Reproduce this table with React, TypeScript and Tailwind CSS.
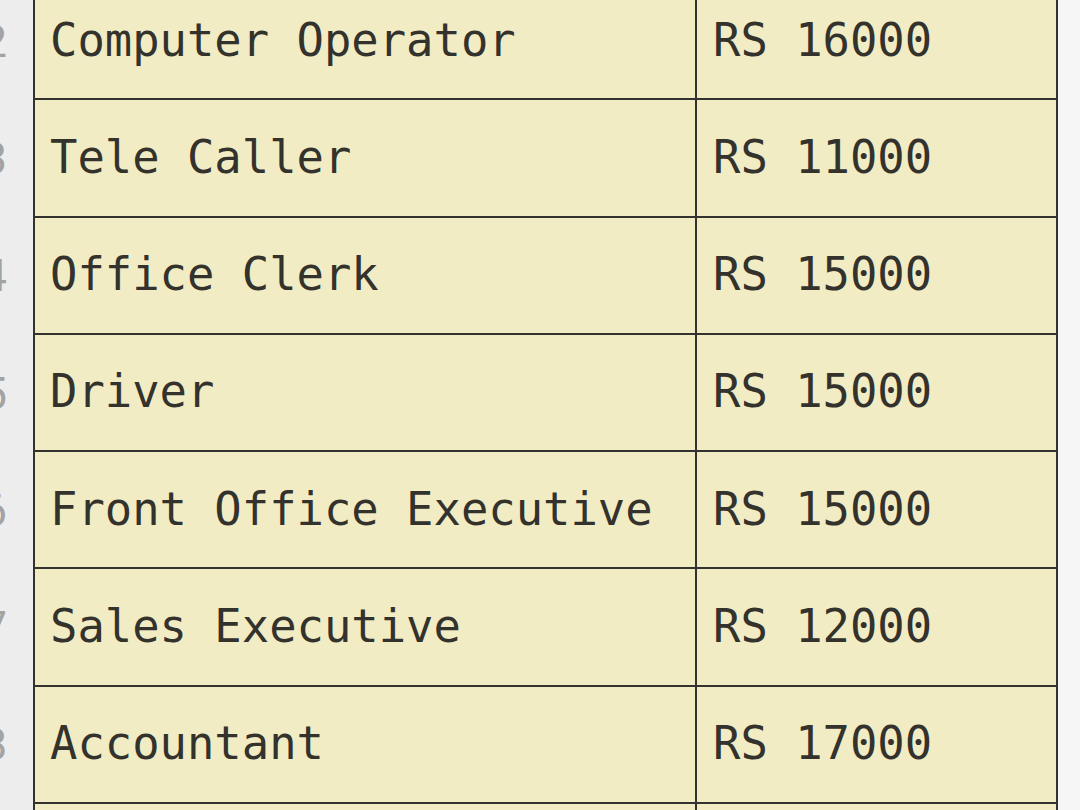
import React from 'react';

const rows = [
  { n: 2, title: 'Computer Operator', salary: 'RS 16000' },
  { n: 3, title: 'Tele Caller', salary: 'RS 11000' },
  { n: 4, title: 'Office Clerk', salary: 'RS 15000' },
  { n: 5, title: 'Driver', salary: 'RS 15000' },
  { n: 6, title: 'Front Office Executive', salary: 'RS 15000' },
  { n: 7, title: 'Sales Executive', salary: 'RS 12000' },
  { n: 8, title: 'Accountant', salary: 'RS 17000' },
  { n: 9, title: '', salary: '' },
];

export default function App() {
  return (
    <div className="w-[1080px] h-[810px] overflow-hidden bg-[#f6f6f6] flex">
      <div className="w-[33px] shrink-0 bg-[#ededed] overflow-hidden">
        <div className="mt-[-17px]">
          {rows.map(r => (
            <div key={r.n} className="h-[117.3px] flex items-center justify-end pr-[26px] text-[44px] text-[#a3a3a3] font-['Roboto',sans-serif]">
              {r.n}
            </div>
          ))}
        </div>
      </div>
      <div className="w-[1025px] shrink-0 mt-[-17px] border-x-2 border-[#33322e] bg-[#f2ecc4] text-[#33322c] text-[45.5px] font-['DejaVu_Sans_Mono',monospace]">
        {rows.map(r => (
          <div key={r.n} className="h-[117.3px] flex border-b-[2.5px] border-[#33322e]">
            <div className="w-[662px] shrink-0 border-r-2 border-[#33322e] flex items-center pl-[15px] whitespace-pre">
              {r.title}
            </div>
            <div className="flex-1 flex items-center pl-[16px] whitespace-pre">
              {r.salary}
            </div>
          </div>
        ))}
      </div>
    </div>
  );
}
